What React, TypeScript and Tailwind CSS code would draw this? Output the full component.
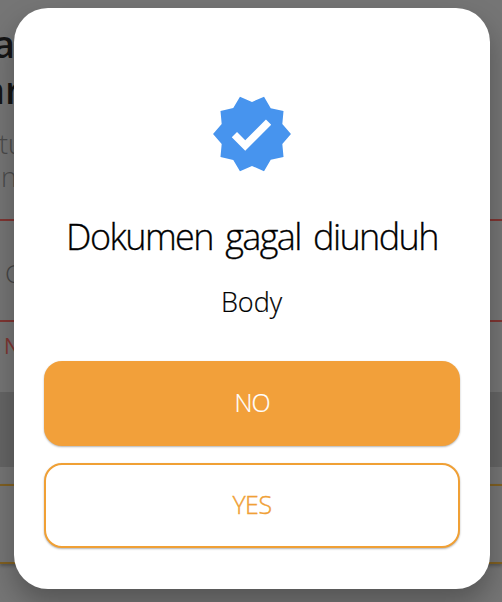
import React from "react";

function PageBehind() {
  return (
    <div className="flex h-full flex-col overflow-hidden bg-[#757575] whitespace-nowrap">
      <div className="-ml-[7px] h-[127px] pt-[20px] text-[38px] leading-[46px] font-semibold text-[#151515]">
        <div>a</div>
        <div className="-ml-[10px]">ar</div>
      </div>
      <div className="h-[92px] text-[27px] leading-[33px] font-light text-[#4b4b4b]">
        <div className="-ml-px">tu</div>
        <div className="ml-px">n</div>
      </div>
      <div className="h-[103px] border-y-2 border-[#7f3532] pt-[34px] pl-[5px] text-[26px] leading-[36px] font-light text-[#454545]">
        C
      </div>
      <div className="h-[70px] pt-[10px] pl-[4px] text-[21px] leading-[28px] text-[#7f3532]">N</div>
      <div className="h-[75px] bg-[#656565]" />
      <div className="mt-[17px] h-[80px] border-y-2 border-[#806022] shadow-[0_2px_3px_rgba(0,0,0,0.25)]" />
    </div>
  );
}

function VerifiedIcon() {
  return (
    <svg viewBox="0 0 24 24" className="h-[85px] w-[85px] -translate-x-[0.5px] translate-y-[0.5px] fill-[#4794ee]">
      <path d="M23 12l-2.44-2.79.34-3.69-3.61-.82-1.89-3.2L12 2.96 8.6 1.5 6.71 4.69 3.1 5.5l.34 3.7L1 12l2.44 2.79-.34 3.7 3.61.82L8.6 22.5l3.4-1.47 3.4 1.46 1.89-3.19 3.61-.82-.34-3.69L23 12zm-12.91 4.72l-3.8-3.81 1.48-1.48 2.32 2.33 5.85-5.87 1.48 1.48-7.33 7.35z" />
    </svg>
  );
}

export default function App() {
  return (
    <div className="relative h-[602px] w-[502px] overflow-hidden font-['Open_Sans','Noto_Sans',sans-serif]">
      <PageBehind />
      <div className="absolute inset-0 pt-[8px] pr-[12px] pl-[14px]">
        <div className="flex h-[581px] flex-col items-center rounded-[34px] bg-white px-[30px] pt-[83px] text-black shadow-[0_14px_28px_rgba(0,0,0,0.28)]">
          <VerifiedIcon />
          <h1 className="mt-[36px] text-[36px] leading-[50px] font-light tracking-[-1.6px] whitespace-nowrap [word-spacing:4.5px] [-webkit-text-stroke:0.3px_black]">
            Dokumen gagal diunduh
          </h1>
          <p className="mt-[21px] -ml-px text-[27px] leading-[38px] font-light [-webkit-text-stroke:0.2px_black]">Body</p>
          <button className="mt-[40px] h-[85px] w-full shrink-0 rounded-[18px] bg-[#f2a03a] pb-[2px] text-[25px] font-light tracking-[-1px] text-white shadow-[0_1px_2px_rgba(0,0,0,0.3)] [-webkit-text-stroke:0.2px_white]">
            NO
          </button>
          <button className="mt-[17px] h-[85px] w-full shrink-0 rounded-[18px] border-2 border-[#f0a035] bg-white pb-[1px] text-[25px] font-light tracking-[-0.5px] text-[#f0a035] shadow-[0_1px_2px_rgba(0,0,0,0.3)] [-webkit-text-stroke:0.4px_#f0a035]">
            YES
          </button>
        </div>
      </div>
    </div>
  );
}
